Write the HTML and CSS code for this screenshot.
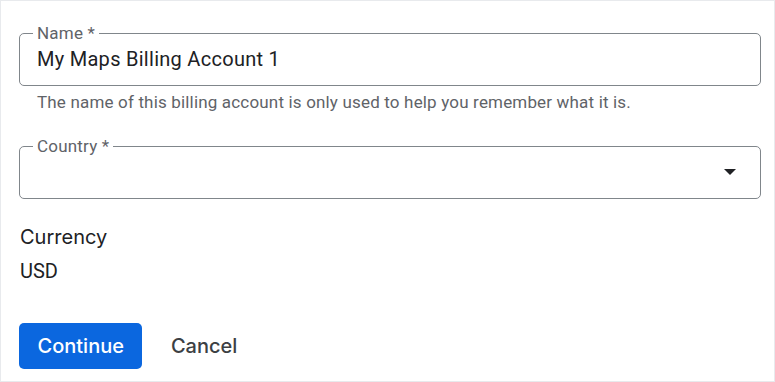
FILE: index.html
```html
<!DOCTYPE html>
<html lang="en">
<head>
<meta charset="utf-8">
<title>Billing account</title>
<link rel="stylesheet" href="styles.css">
</head>
<body>
<div class="card">
  <fieldset class="field">
    <legend class="field-label">Name *</legend>
    <div class="field-value">My Maps Billing Account 1</div>
  </fieldset>
  <p class="hint">The name of this billing account is only used to help you remember what it is.</p>

  <fieldset class="field field-select">
    <legend class="field-label">Country *</legend>
    <div class="field-value"></div>
    <span class="arrow"></span>
  </fieldset>

  <h2 class="section-title">Currency</h2>
  <p class="section-value">USD</p>

  <div class="actions">
    <button class="btn btn-primary">Continue</button>
    <button class="btn btn-text">Cancel</button>
  </div>
</div>
</body>
</html>
```

FILE: styles.css
```css
* { box-sizing: border-box; }

html, body {
  margin: 0;
  padding: 0;
  background: #ffffff;
}

body {
  font-family: Roboto, "Liberation Sans", Arial, sans-serif;
  color: #202124;
}

.card {
  width: 775px;
  height: 382px;
  border: 1px solid #e8eaed;
  padding: 22px 13px 0 18px;
}

.field {
  margin: 0;
  border: 1px solid #80868b;
  border-radius: 5px;
  padding: 0 13px 10px 13px;
  display: flex;
  align-items: center;
}

.field-label {
  padding: 0 4px;
  margin-left: 0;
  font-size: 17px;
  line-height: 20px;
  letter-spacing: 0.2px;
  color: #5f6368;
}

.field-value {
  flex: 1;
  height: 32px;
  line-height: 32px;
  padding-left: 4px;
  font-size: 20px;
  letter-spacing: 0.28px;
  color: #202124;
}

.field-select {
  position: relative;
}

.arrow {
  width: 0;
  height: 0;
  border-left: 6.5px solid transparent;
  border-right: 6.5px solid transparent;
  border-top: 6.5px solid #202124;
  margin-right: 11px;
}

.hint {
  margin: 6px 0 24px 0;
  padding-left: 18px;
  font-size: 17px;
  line-height: 20px;
  letter-spacing: 0.17px;
  color: #5f6368;
}

.section-title {
  margin: 26px 0 0 0;
  padding-left: 1px;
  font-family: Inter, "Open Sans", sans-serif;
  font-weight: 400;
  font-size: 20px;
  line-height: 24px;
  color: #202124;
}

.section-value {
  margin: 10px 0 0 0;
  padding-left: 1px;
  font-size: 20px;
  line-height: 24px;
  color: #202124;
}

.actions {
  margin-top: 40px;
  display: flex;
  gap: 10px;
}

.btn {
  height: 46px;
  padding: 0 18.5px;
  border: none;
  border-radius: 5px;
  font-family: Inter, "Open Sans", sans-serif;
  font-weight: 500;
  font-size: 20px;
  cursor: pointer;
}

.btn-primary {
  background: #0b67df;
  color: #ffffff;
}

.btn-text {
  background: transparent;
  color: #3c4043;
}
```
